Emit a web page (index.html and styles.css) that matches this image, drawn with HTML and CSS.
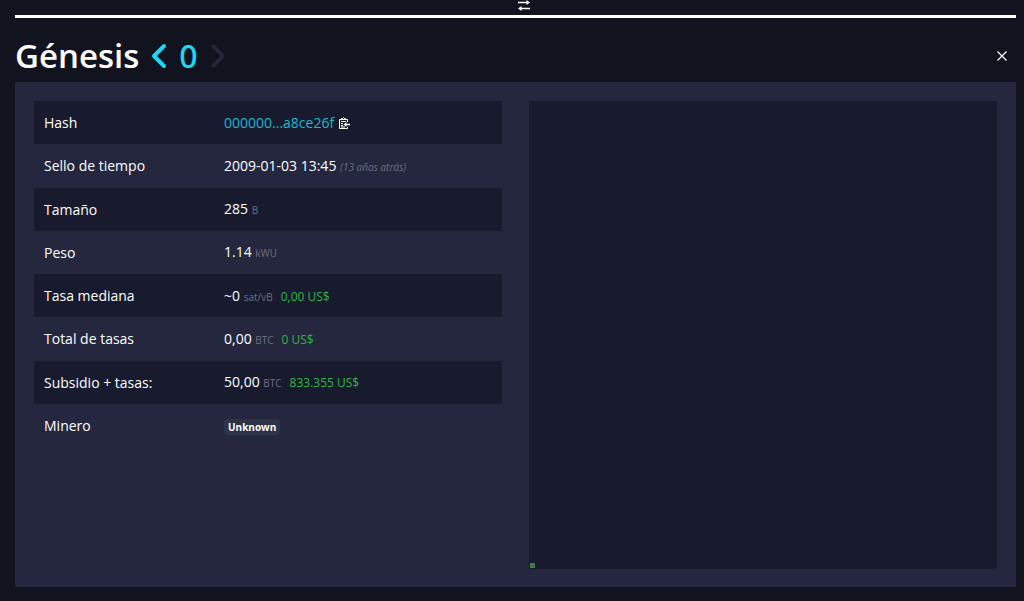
FILE: index.html
```
<!DOCTYPE html>
<html lang="es">
<head>
<meta charset="utf-8">
<meta name="viewport" content="width=device-width, initial-scale=1">
<title>Génesis</title>
<link rel="stylesheet" href="styles.css">
</head>
<body>
<div class="page">
  <div class="chain-divider">
    <button class="icon-button swap" type="button" aria-label="Invertir dirección">
      <svg width="12" height="12" viewBox="0 0 12 12" fill="none" stroke="currentColor" stroke-width="1.4"><path d="M0 2.500h10M2 8.500h10"/><path d="M8.500 0v5L12 2.500zM3.500 6v5L0 8.500z" fill="currentColor" stroke="none"/></svg>
    </button>
  </div>
  <header class="block-header">
    <h1 class="title">Génesis</h1>
    <nav class="block-nav" aria-label="Bloques">
      <a class="nav-link" href="#" aria-label="Anterior"><svg width="16" height="26" viewBox="0 0 16 26" fill="none" stroke="currentColor" stroke-width="4" stroke-linecap="round" stroke-linejoin="round"><path d="M13 3 3 13l10 10"/></svg></a>
      <a class="nav-link" href="#">0</a>
      <span class="nav-disabled"><svg width="16" height="26" viewBox="0 0 16 26" fill="none" stroke="currentColor" stroke-width="3.5" stroke-linecap="round" stroke-linejoin="round"><path d="m3 3 10 10L3 23"/></svg></span>
    </nav>
    <button class="icon-button close" type="button" aria-label="Cerrar">
      <svg width="10" height="10" viewBox="0 0 10 10" fill="none" stroke="currentColor" stroke-width="1.2"><path d="m.5.5 9 9m0-9-9 9"/></svg>
    </button>
  </header>
  <main class="panel">
    <table class="details">
      <tbody>
        <tr><th scope="row">Hash</th><td><a class="hash" href="#">000000...a8ce26f</a><button class="icon-button copy" type="button" aria-label="Copiar"><svg width="12" height="12" viewBox="0 0 12 12" fill="none" stroke="currentColor"><path d="M9.500 5V2.500H1.500v9h8V10M3 4.500h5M3 6.500h2M3 8.500h2M3 10h4"/><path d="M3.500 2.500V1.500h1L5.500.5l1 1h1v1z"/><path d="M7 7.500h5" stroke-width="1.500"/><path d="M8.500 5v5L5.500 7.500z" fill="currentColor" stroke="none"/></svg></button></td></tr>
        <tr><th scope="row">Sello de tiempo</th><td>2009-01-03 13:45 <i class="unit">(13 años atrás)</i></td></tr>
        <tr><th scope="row">Tamaño</th><td>285 <span class="unit">B</span></td></tr>
        <tr><th scope="row">Peso</th><td>1.14 <span class="unit">kWU</span></td></tr>
        <tr><th scope="row">Tasa mediana</th><td>~0 <span class="unit">sat/vB</span><span class="fiat">0,00 US$</span></td></tr>
        <tr><th scope="row">Total de tasas</th><td>0,00 <span class="unit">BTC</span><span class="fiat">0 US$</span></td></tr>
        <tr><th scope="row">Subsidio + tasas:</th><td>50,00 <span class="unit">BTC</span><span class="fiat">833.355 US$</span></td></tr>
        <tr><th scope="row">Minero</th><td><span class="badge">Unknown</span></td></tr>
      </tbody>
    </table>
    <div class="overview"><div class="tx"></div></div>
  </main>
</div>
</body>
</html>
```
FILE: styles.css
```
* { box-sizing: border-box; }

body {
  margin: 0;
  background: #11131f;
  color: #fff;
  font-family: "Segoe UI", "Open Sans", "Noto Sans", sans-serif;
  font-size: 14px;
  line-height: 20px;
}

a { text-decoration: none; }

.page { padding: 0 8px 14px 15px; }

.icon-button {
  display: inline-flex;
  padding: 0;
  border: 0;
  background: none;
  color: inherit;
  cursor: pointer;
}

.chain-divider {
  display: flex;
  justify-content: center;
  height: 18px;
  padding-left: 16px;
  border-bottom: 3px solid #fff;
}

.swap { align-items: flex-start; }

.block-header {
  display: flex;
  align-items: center;
  height: 64px;
  padding: 11px 9px 0 0;
}

.title {
  margin: 0;
  font-size: 33px;
  line-height: 40px;
  font-weight: 600;
}

.block-nav {
  display: flex;
  align-items: center;
  gap: 12px;
  margin-left: 12px;
  font-family: "Segoe UI", "Noto Sans", sans-serif;
  font-size: 32px;
  line-height: 40px;
  font-weight: 500;
}

.block-nav svg { display: block; }

.nav-link { color: #1bd8f4; }

.nav-disabled { color: #24273e; }

.close { margin-left: auto; }

.panel {
  display: grid;
  grid-template-columns: 1fr 1fr;
  align-items: start;
  gap: 27px;
  padding: 19px 19px 18px;
  background: #24273e;
}

.details {
  width: 100%;
  height: 346px;
  border-collapse: collapse;
  table-layout: fixed;
}

.details tr { height: 43px; }

.details tr:nth-child(odd) { background: #181b2d; }

.details th,
.details td {
  padding: 1px 10px 0;
  text-align: left;
  font-weight: 400;
  white-space: nowrap;
}

.details th { width: 180px; }

.hash { color: #1bb8cf; }

.copy {
  margin-left: 4px;
  vertical-align: -1px;
}

.unit {
  color: #6c7080;
  font-size: 10px;
}

.fiat {
  margin-left: 8px;
  color: #2db742;
  font-size: 12px;
}

.badge {
  display: inline-block;
  padding: 0 4px;
  border-radius: 4px;
  background: #2d3348;
  font-size: 10px;
  line-height: 16px;
  font-weight: 700;
}

.overview {
  display: flex;
  align-items: flex-end;
  aspect-ratio: 1;
  padding: 1px;
  background: #181b2d;
}

.tx {
  width: 5px;
  height: 5px;
  background: #3b7d43;
}
```
